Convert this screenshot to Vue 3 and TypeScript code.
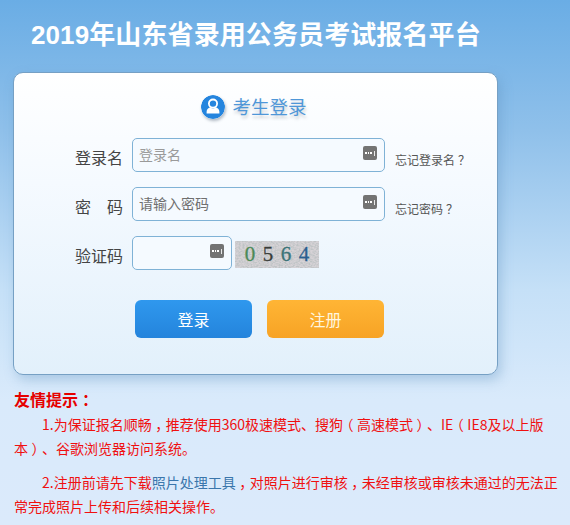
<script setup lang="ts">
const captchaDigits = [
  { ch: '0', color: '#4c8a58' },
  { ch: '5', color: '#3a3d3a' },
  { ch: '6', color: '#3b7478' },
  { ch: '4', color: '#2a5f90' },
]
</script>

<template>
  <div class="page">
    <h1 class="title">2019年山东省录用公务员考试报名平台</h1>
    <section class="card">
      <header class="heading">
        <svg class="avatar" width="24" height="24" viewBox="0 0 24 24">
          <circle cx="12" cy="12" r="12" fill="#2585de" />
          <circle cx="12" cy="8.6" r="4.1" fill="none" stroke="#fff" stroke-width="1.8" />
          <path d="M5.6 18.4v-1.600c0-2.600 2-4.200 3.900-4.200.8.6 1.600.9 2.500.9s1.700-.3 2.500-.9c1.900 0 3.900 1.600 3.900 4.200v1.600z" fill="#fff" />
        </svg>
        <span class="heading-text">考生登录</span>
      </header>

      <div class="row">
        <span class="label">登录名</span>
        <div class="field">
          <input class="input" placeholder="登录名" />
          <span class="key"><i></i><i></i><i></i><b></b></span>
        </div>
        <a class="forgot">忘记登录名<span class="p">？</span></a>
      </div>
      <div class="row">
        <span class="label spaced"><span>密</span><span>码</span></span>
        <div class="field">
          <input class="input strong" placeholder="请输入密码" />
          <span class="key"><i></i><i></i><i></i><b></b></span>
        </div>
        <a class="forgot">忘记密码<span class="p">？</span></a>
      </div>
      <div class="row">
        <span class="label">验证码</span>
        <div class="field short">
          <input class="input" />
          <span class="key"><i></i><i></i><i></i><b></b></span>
        </div>
        <div class="captcha">
          <svg class="noise" width="84" height="27">
            <filter id="grain" x="0" y="0" width="100%" height="100%">
              <feTurbulence type="fractalNoise" baseFrequency="0.5 0.75" numOctaves="2" seed="6" />
              <feColorMatrix values="0 0 0 0 0.52  0 0 0 0 0.55  0 0 0 0 0.56  3 0 0 0 -1.1" />
            </filter>
            <rect width="84" height="27" fill="#d6d2d6" />
            <rect width="84" height="27" filter="url(#grain)" />
          </svg>
          <span v-for="d in captchaDigits" :key="d.ch" class="digit" :style="{ color: d.color }">{{ d.ch }}</span>
        </div>
      </div>

      <div class="actions">
        <button class="btn blue">登录</button>
        <button class="btn orange">注册</button>
      </div>
    </section>

    <section class="tips">
      <h2 class="tips-title">友情提示<span class="p">：</span></h2>
      <p class="tip">1.为保证报名顺畅<span class="p">，</span>推荐使用360极速模式、搜狗<span class="p">（</span>高速模式<span class="p">）</span>、IE<span class="p">（</span>IE8及以上版本<span class="p">）</span>、谷歌浏览器访问系统。</p>
      <p class="tip second">2.注册前请先下载<a class="tool">照片处理工具</a><span class="p">，</span>对照片进行审核<span class="p">，</span>未经审核或审核未通过的无法正常完成照片上传和后续相关操作。</p>
    </section>
  </div>
</template>

<style>
html, body { margin: 0; background: #dbeafb; }
</style>

<style scoped>
.page {
  width: 570px;
  height: 525px;
  overflow: hidden;
  font-family: "Noto Sans CJK SC", "Noto Sans", sans-serif;
  background: linear-gradient(180deg, #6aade5 0, #8fc0ea 130px, #c5e0f7 290px, #d9eafb 400px, #dbeafb 525px);
}
.p {
  font-feature-settings: "halt";
  padding: 0 0.25em;
}
.title {
  margin: 0;
  padding-left: 31px;
  font-size: 26px;
  line-height: 70px;
  height: 68px;
  font-weight: 700;
  letter-spacing: 0.1px;
  color: #fff;
  font-family: "Liberation Sans", "Noto Sans CJK SC", sans-serif;
  white-space: nowrap;
}
.card {
  box-sizing: border-box;
  width: 485px;
  height: 303px;
  margin: 4px 0 0 13px;
  padding: 22px 0 0 0;
  border: 1px solid #76a0c4;
  border-radius: 10px;
  background: linear-gradient(180deg, #fff 0, #f5faff 110px, #e2f0fb 100%);
  box-shadow: 3px 5px 12px rgba(90, 140, 185, 0.35);
}
.heading {
  display: flex;
  align-items: center;
  justify-content: center;
  height: 24px;
  gap: 7px;
  margin-bottom: 19px;
  padding-right: 3px;
}
.avatar {
  border-radius: 50%;
  box-shadow: 1px 2px 3px rgba(70, 90, 110, 0.4);
}
.heading-text {
  font-size: 18.5px;
  line-height: 24px;
  margin-top: -3px;
  color: #4f97d8;
  text-shadow: 1px 3px 3px rgba(100, 110, 120, 0.3);
}
.row {
  display: flex;
  align-items: flex-start;
  height: 34px;
  margin-bottom: 15px;
  padding-left: 61px;
}
.label {
  width: 48px;
  margin-right: 9px;
  margin-top: 2px;
  font-size: 16px;
  line-height: 34px;
  color: #444;
  white-space: nowrap;
}
.spaced {
  display: flex;
  justify-content: space-between;
}
.field {
  position: relative;
  width: 253px;
  height: 34px;
  flex: none;
}
.field.short { width: 100px; }
.input {
  box-sizing: border-box;
  display: block;
  width: 100%;
  height: 100%;
  padding: 0 6px 2px;
  border: 1px solid #7fb2d6;
  border-radius: 5px;
  outline: none;
  background: #f5faff;
  font-family: inherit;
  font-size: 14px;
}
.input::placeholder { color: #9a9a9a; opacity: 1; }
.input.strong::placeholder { color: #6f6f6f; }
.key {
  position: absolute;
  top: 8px;
  right: 8px;
  box-sizing: border-box;
  width: 14px;
  height: 14px;
  border-radius: 2px;
  background: #737373;
  display: flex;
  align-items: center;
  gap: 1px;
  padding-left: 2px;
}
.key i {
  width: 1.5px;
  height: 2px;
  background: #fff;
}
.key b {
  width: 1px;
  height: 5px;
  margin-left: 1px;
  background: #e8e8e8;
}
.forgot {
  margin-left: 10px;
  padding-top: 14px;
  font-size: 12px;
  line-height: 16px;
  color: #555;
  white-space: nowrap;
}
.captcha {
  position: relative;
  display: flex;
  justify-content: space-around;
  align-items: center;
  box-sizing: border-box;
  width: 84px;
  height: 27px;
  margin: 5px 0 0 3px;
  padding: 0 6px;
  overflow: hidden;
}
.noise {
  position: absolute;
  inset: 0;
}
.digit {
  position: relative;
  font-family: "Liberation Serif", serif;
  font-size: 21px;
  line-height: 27px;
  -webkit-text-stroke: 0.3px currentColor;
}
.actions {
  display: flex;
  gap: 15px;
  margin: 30px 0 0 121px;
}
.btn {
  width: 117px;
  height: 38px;
  padding: 0;
  border: none;
  border-radius: 6px;
  color: #fff;
  font-family: inherit;
  font-size: 16px;
}
.blue { background: linear-gradient(180deg, #2f98ee, #2484dc); }
.orange { background: linear-gradient(180deg, #ffb535, #f7a325); color: #fff6df; }
.tips {
  width: 545px;
  margin: 12px 0 0 14px;
  color: #f01010;
}
.tips-title {
  margin: 0 0 1px;
  font-size: 16px;
  line-height: 24px;
  font-weight: 700;
  color: #e60000;
}
.tip {
  margin: 0;
  font-size: 14px;
  line-height: 24px;
  text-indent: 28px;
}
.tip.second { margin-top: 10px; }
.tool { color: #3a76ac; }
</style>
